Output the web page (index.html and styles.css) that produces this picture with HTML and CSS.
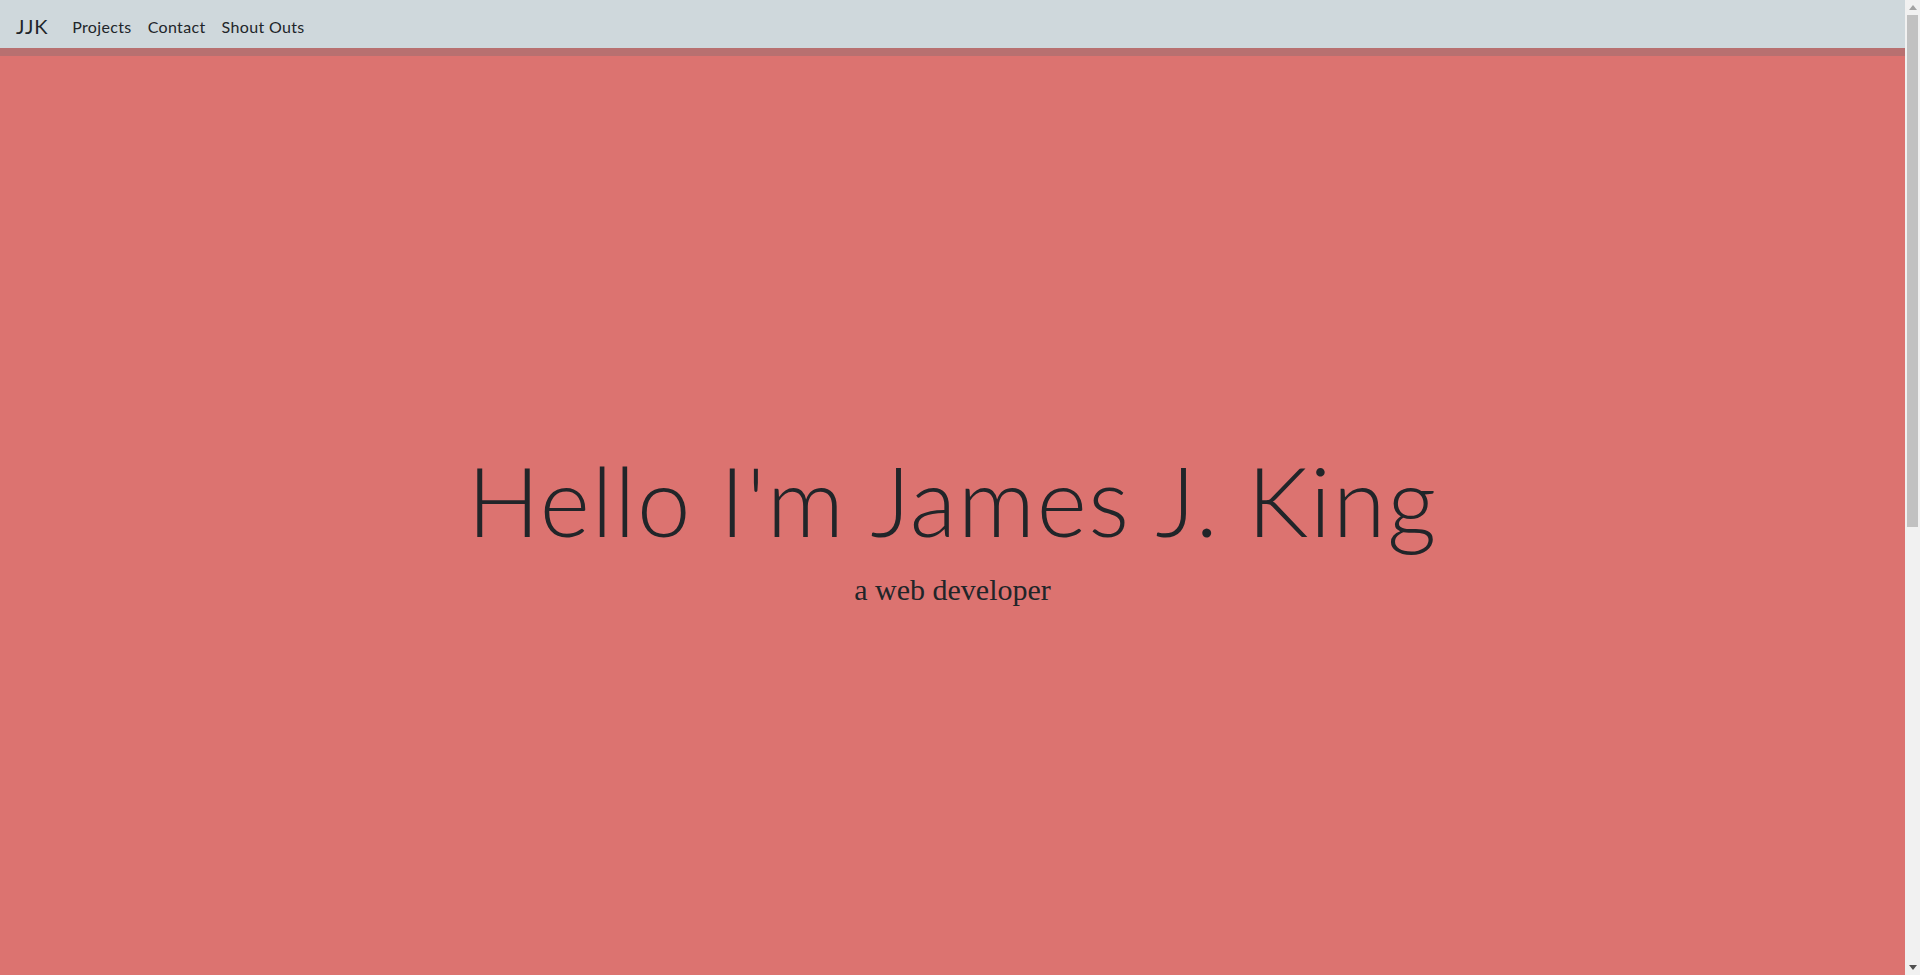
FILE: index.html
```html
<!DOCTYPE html>
<html lang="en">
<head>
<meta charset="utf-8">
<title>James J. King</title>
<link rel="stylesheet" href="styles.css">
</head>
<body>
<nav class="navbar">
  <a class="brand" href="#">JJK</a>
  <ul class="nav-links">
    <li><a href="#">Projects</a></li>
    <li><a href="#">Contact</a></li>
    <li><a href="#">Shout Outs</a></li>
  </ul>
</nav>
<main class="hero">
  <h1 class="hero-title">Hello I'm James J. King</h1>
  <p class="hero-sub">a web developer</p>
</main>
<aside class="scrollbar" aria-hidden="true">
  <div class="sb-btn">
    <svg width="8" height="5" viewBox="0 0 8 5"><polygon points="0,5 8,5 4,0" fill="#a3a3a3"/></svg>
  </div>
  <div class="sb-track"><div class="sb-thumb"></div></div>
  <div class="sb-btn">
    <svg width="8" height="5" viewBox="0 0 8 5"><polygon points="0,0 8,0 4,5" fill="#505050"/></svg>
  </div>
</aside>
</body>
</html>
```
FILE: styles.css
```css
html, body {
  margin: 0;
  padding: 0;
}
body {
  background: #dc7370;
  color: #212529;
  font-family: "Lato", "Open Sans", sans-serif;
  margin-right: 15px;
}
.navbar {
  display: flex;
  align-items: center;
  height: 48px;
  padding: 0 16px;
  background: #cfd8dc;
  border-bottom: 8px solid #b87070;
}
.brand {
  font-size: 20px;
  letter-spacing: 0.8px;
  color: #212529;
  text-decoration: none;
  margin-right: 16px;
  padding-top: 4px;
}
.nav-links {
  display: flex;
  list-style: none;
  margin: 0;
  padding: 0;
}
.nav-links a {
  display: block;
  padding: 4px 8px 0;
  font-size: 16px;
  letter-spacing: 0.35px;
  color: #212529;
  text-decoration: none;
}
.hero {
  display: flex;
  flex-direction: column;
  align-items: center;
  padding-top: 386px;
  min-height: 1358px;
  text-align: center;
}
.hero-title {
  margin: 0 0 15px;
  font-size: 96px;
  font-weight: 300;
  letter-spacing: 1.6px;
  line-height: 1.2;
}
.hero-sub {
  margin: 0;
  font-family: "Liberation Serif", serif;
  font-size: 30px;
  line-height: 1.2;
}
.scrollbar {
  position: fixed;
  top: 0;
  right: 0;
  bottom: 0;
  width: 15px;
  background: #f1f1f1;
  display: flex;
  flex-direction: column;
}
.sb-btn {
  height: 15px;
  display: flex;
  align-items: center;
  justify-content: center;
  flex: none;
}
.sb-btn svg {
  display: block;
}
.sb-track {
  flex: 1;
  padding: 0 2px;
}
.sb-thumb {
  height: 512px;
  background: #c1c1c1;
}
```
